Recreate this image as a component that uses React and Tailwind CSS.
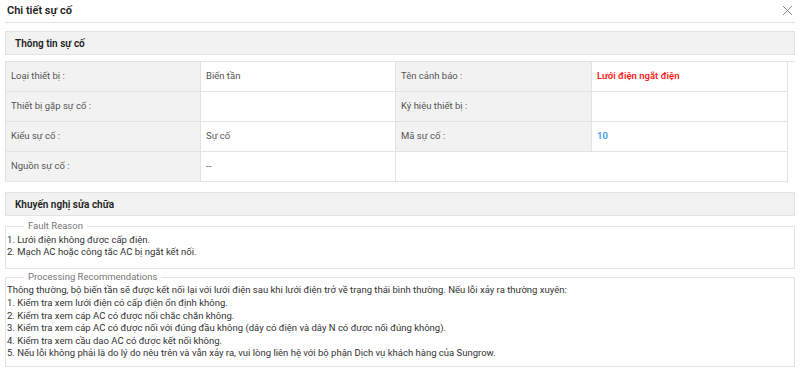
import { X } from "lucide-react";

const rows = [
    [
        { label: "Loại thiết bị :", value: "Biến tần" },
        { label: "Tên cảnh báo :", value: "Lưới điện ngắt điện", tone: "red" },
    ],
    [
        { label: "Thiết bị gặp sự cố :", value: "" },
        { label: "Ký hiệu thiết bị :", value: "" },
    ],
    [
        { label: "Kiểu sự cố :", value: "Sự cố" },
        { label: "Mã sự cố :", value: "10", tone: "blue" },
    ],
];

const toneClass = {
    red: "text-[#ff1a1a] font-semibold",
    blue: "text-[#3d9bf0] font-semibold",
};

const SectionHeader = ({ title }) => (
    <div className="h-[24px] flex items-center bg-[#f2f2f2] border border-[#e3e3e3] pl-[9px] text-[10px] font-semibold text-[#222]">
        {title}
    </div>
);

const Label = ({ children }) => (
    <div className="h-[30px] flex items-center pl-[5px] bg-[#f2f2f2] border-r border-b border-[#e3e3e3] text-[#555]">
        {children}
    </div>
);

const Value = ({ children, tone }) => (
    <div
        className={`h-[30px] flex items-center pl-[5px] bg-white border-r border-b border-[#e3e3e3] ${
            tone ? toneClass[tone] : "text-[#555]"
        }`}
    >
        {children}
    </div>
);

const Box = ({ legend, children, pad }) => (
    <fieldset className={`border border-[#e3e3e3] pl-px text-[9.5px] leading-[12.6px] text-[#333] ${pad}`}>
        <legend className="ml-[17px] px-[4px] mb-[1px] text-[#777]">{legend}</legend>
        {children}
    </fieldset>
);

export default function App() {
    return (
        <div className="w-[800px] h-[369px] bg-white px-[5px] overflow-hidden font-['Roboto',sans-serif] text-[9.5px]">
            {/* Header */}
            <div className="h-[23px] flex items-center justify-between border-b border-[#e3e3e3] pl-[2px]">
                <h2 className="text-[11px] font-semibold text-[#222]">Chi tiết sự cố</h2>
                <X className="w-[17px] h-[17px] text-[#777] -mr-[1px] mb-[1px]" strokeWidth={1.2} />
            </div>

            <div className="mt-[8px]">
                <SectionHeader title="Thông tin sự cố" />
            </div>

            {/* Info table */}
            <div className="mt-[6px] grid grid-cols-[195px_195px_196px_196px] border-l border-t border-[#e3e3e3]">
                {rows.map((row, i) =>
                    row.map((cell) => [
                        <Label key={`${i}-${cell.label}-l`}>{cell.label}</Label>,
                        <Value key={`${i}-${cell.label}-v`} tone={cell.tone}>
                            {cell.value}
                        </Value>,
                    ])
                )}
                <Label>Nguồn sự cố :</Label>
                <Value>--</Value>
                <div className="col-span-2 h-[30px] bg-white border-r border-b border-[#e3e3e3]" />
            </div>

            <div className="mt-[10px]">
                <SectionHeader title="Khuyến nghị sửa chữa" />
            </div>

            <div className="mt-[4px]">
                <Box legend="Fault Reason" pad="pb-[9px]">
                    <p>1. Lưới điện không được cấp điện.</p>
                    <p>2. Mạch AC hoặc công tắc AC bị ngắt kết nối.</p>
                </Box>
            </div>

            <div className="mt-[2px]">
                <Box legend="Processing Recommendations" pad="pb-[6px]">
                    <p>
                        Thông thường, bộ biến tần sẽ được kết nối lại với lưới điện sau khi lưới điện trở về trạng
                        thái bình thường. Nếu lỗi xảy ra thường xuyên:
                    </p>
                    <p>1. Kiểm tra xem lưới điện có cấp điện ổn định không.</p>
                    <p>2. Kiểm tra xem cáp AC có được nối chắc chắn không.</p>
                    <p>
                        3. Kiểm tra xem cáp AC có được nối với đúng đầu không (dây có điện và dây N có được nối đúng
                        không).
                    </p>
                    <p>4. Kiểm tra xem cầu dao AC có được kết nối không.</p>
                    <p>
                        5. Nếu lỗi không phải là do lý do nêu trên và vẫn xảy ra, vui lòng liên hệ với bộ phận Dịch vụ
                        khách hàng của Sungrow.
                    </p>
                </Box>
            </div>
        </div>
    );
}
